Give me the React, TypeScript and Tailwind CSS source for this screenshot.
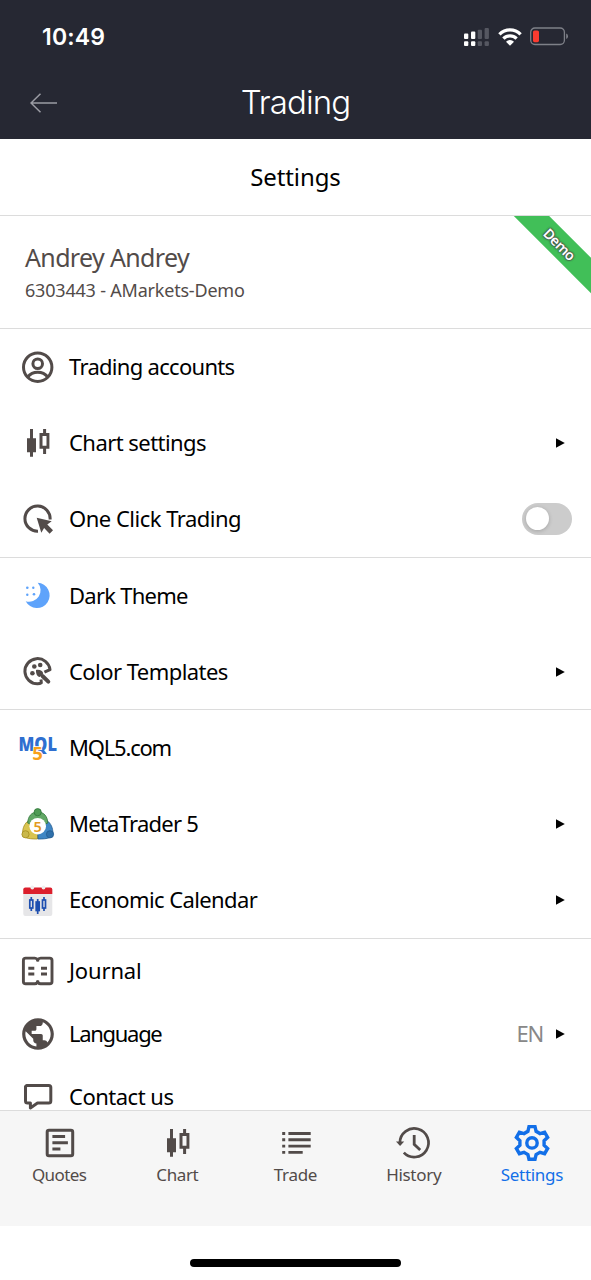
import type { ReactNode } from "react";
import { MdPublic } from "react-icons/md";

interface MenuItem {
  label: string;
  icon: ReactNode;
  tracking: string;
  arrow?: boolean;
  toggle?: boolean;
  value?: string;
}

function Icon({ children }: { children: ReactNode }) {
  return (
    <svg viewBox="0 0 38 38" className="h-[38px] w-[38px] shrink-0 overflow-visible" fill="none">
      {children}
    </svg>
  );
}

const userIcon = (
  <Icon>
    <g stroke="currentColor" strokeWidth="3">
      <circle cx="18.7" cy="19.2" r="14.2" />
      <circle cx="18.7" cy="15.7" r="4.8" />
      <path d="M8.6 29c2.6-3.3 6-4.8 10.1-4.8s7.500 1.500 10.100 4.800" />
    </g>
  </Icon>
);

const candlesIcon = (
  <Icon>
    <path fill="currentColor" d="M11 5h3v9.300h3v14h-3v4.400h-3v-4.400h-3v-14h3z" />
    <path
      fill="currentColor"
      fillRule="evenodd"
      d="M24.100 5h3v4h3.300v15.700h-3.300v5.300h-3v-5.300h-3.600v-15.700h3.600zM23.500 12v9.700h4v-9.700z"
    />
  </Icon>
);

const clickIcon = (
  <Icon>
    <path stroke="currentColor" strokeWidth="3" d="M19 31.200A12.600 12.600 0 1 1 31.100 19.500" />
    <path fill="currentColor" d="M17.700 17.700l15 3.600-4.400 3.200 5.700 5.800-3.400 3.400-5.500-5.700-2.800 4.700z" />
  </Icon>
);

const moonIcon = (
  <Icon>
    <g fill="#5ea3fb">
      <path d="M18.700 5.700A12.700 12.700 0 1 1 6.700 24.300A11.500 11.500 0 0 0 18.700 5.700z" />
      <circle cx="8.300" cy="10.700" r="1.300" />
      <circle cx="14.300" cy="10.700" r="1.200" />
      <circle cx="8.300" cy="17.700" r="1.200" />
      <circle cx="15" cy="17.300" r="1.300" />
    </g>
  </Icon>
);

const paletteIcon = (
  <Icon>
    <path
      stroke="currentColor"
      strokeWidth="3"
      strokeLinejoin="round"
      d="M22 26.500l.3 3.300c-1 .7-2.300 1-3.700 1A12.600 12.600 0 1 1 31 16.600l-5.600 2.600"
    />
    <g fill="currentColor">
      <circle cx="15.300" cy="13.500" r="2.300" />
      <circle cx="21.200" cy="12" r="2.300" />
      <circle cx="13.400" cy="20.200" r="2.300" />
      <path d="M17 17c3.500-.6 6.700.4 7.200 3.500l-3.400 3.500c-2.800-.5-4-3.500-3.800-7z" />
    </g>
    <path stroke="currentColor" strokeWidth="4" strokeLinecap="round" d="M23.500 23l5.800 5.600" />
  </Icon>
);

const mqlIcon = (
  <Icon>
    <g className="font-['Open_Sans',sans-serif]">
      <text
        x="-0.500"
        y="22"
        fontSize="19"
        textLength="38.500"
        lengthAdjust="spacingAndGlyphs"
        fill="#2f6fd0"
        className="font-extrabold"
      >
        MQL
      </text>
      <text
        x="13.300"
        y="30.500"
        fontSize="18.500"
        fill="#f7a11b"
        stroke="#fff"
        strokeWidth="1.500"
        paintOrder="stroke"
        className="font-bold"
      >
        5
      </text>
    </g>
  </Icon>
);

const metaTraderIcon = (
  <Icon>
    <g strokeWidth="0.800">
      <path fill="#d9c450" stroke="#a58d20" d="M9.500 15.500C5.500 18.500 3.500 23 3.600 28.500c0 4 4.400 5.600 14.900 5.500l.2-12z" />
      <path fill="#3f86c4" stroke="#235c91" d="M28 15.500c4 3 6 7.500 5.900 13 0 4-4.400 5.600-14.900 5.500l-.3-12z" />
      <path fill="#62a866" stroke="#2f7638" d="M8.700 18c.3-6.500 3.500-11 10-11s9.800 4.500 10.100 11l-10.100 4z" />
      <circle cx="18.700" cy="7.200" r="3.600" fill="#4f9b55" stroke="#2f7638" />
      <circle cx="6.500" cy="29.300" r="3.600" fill="#c9b84c" stroke="#a58d20" />
      <circle cx="31" cy="29.300" r="3.600" fill="#2f70ab" stroke="#235c91" />
    </g>
    <circle cx="18.700" cy="21.200" r="8.300" fill="#fff" />
    <text
      x="18.700"
      y="26.500"
      textAnchor="middle"
      fontSize="14.500"
      fill="#e39b1e"
      className="font-['Noto_Sans',sans-serif] font-semibold"
    >
      5
    </text>
  </Icon>
);

const calendarIcon = (
  <Icon>
    <rect x="4.300" y="7" width="29" height="28" rx="2" fill="#e6e6e8" />
    <path fill="#dc1f2c" d="M4.300 13V8.500q0-2 2-2h25q2 0 2 2V13z" />
    <circle cx="13.300" cy="6.500" r="1.900" fill="#eee" />
    <circle cx="24.500" cy="6.500" r="1.900" fill="#eee" />
    <g stroke="#1e4fb0" strokeWidth="1.700">
      <path d="M12.300 16v3m0 8v3M18.700 18v15M25 16v3m0 8v3" />
      <rect x="10.800" y="19" width="3" height="8" />
      <rect x="17.200" y="21" width="3" height="8.500" fill="#1e4fb0" />
      <rect x="23.500" y="19" width="3" height="8" />
    </g>
  </Icon>
);

const journalIcon = (
  <Icon>
    <path
      stroke="currentColor"
      strokeWidth="2.900"
      strokeLinejoin="round"
      d="M18.700 8c-.6-1.300-1.600-1.900-3-1.900H6.700q-2.300 0-2.300 2.300v21q0 2.300 2.300 2.300h9c1.400 0 2.400-.6 3-1.900.6 1.300 1.600 1.900 3 1.900h9q2.300 0 2.300-2.300v-21q0-2.300-2.300-2.300h-9c-1.400 0-2.400.6-3 1.900z"
    />
    <path stroke="currentColor" strokeWidth="2.900" d="M9.300 16.200h6M9.300 22h6M22 16.200h6M22 22h6M18.700 7v2.500M18.700 28.500v2.500" />
  </Icon>
);

const globeIcon = <MdPublic className="h-[38px] w-[38px] shrink-0" />;

const contactIcon = (
  <Icon>
    <path
      stroke="currentColor"
      strokeWidth="3"
      strokeLinejoin="round"
      d="M7.500 7.600h22.300q2 0 2 2v13.500q0 2-2 2H18.500L11.400 30v-4.900H8.500q-2 0-2-2V8.600z"
    />
  </Icon>
);

const quotesIcon = (
  <Icon>
    <rect x="6.200" y="6.200" width="25.500" height="25.500" rx="1.800" stroke="currentColor" strokeWidth="3" />
    <path stroke="currentColor" strokeWidth="3" d="M11.400 12.500h12.700M11.400 18.800h15.500M11.400 25.100h8" />
  </Icon>
);

const tradeIcon = (
  <Icon>
    <path
      stroke="currentColor"
      strokeWidth="2.900"
      d="M5.200 9.500h3M5.200 15.800h3M5.200 22.100h3M5.200 28.400h3M11.400 9.500h22.300M11.400 15.800h22.300M11.400 22.100h22.300M11.400 28.400h14.300"
    />
  </Icon>
);

const historyIcon = (
  <Icon>
    <path stroke="currentColor" strokeWidth="2.700" d="M4.900 18.700A14.300 14.300 0 1 1 8.800 28.600" />
    <path fill="currentColor" d="M1 17.400h8.200l-4.100 4.600z" />
    <path stroke="currentColor" strokeWidth="2.800" d="M19.200 11v9.300l6 5.600" />
  </Icon>
);

// Six teeth, four outline points each, rotated around the centre
const gearPoints = [0, 60, 120, 180, 240, 300]
  .flatMap((deg) => {
    const a = (deg * Math.PI) / 180;
    return [
      [-4.1, -11.6],
      [-3, -16.3],
      [3, -16.3],
      [4.1, -11.6],
    ].map(([x, y]) => `${19 + x * Math.cos(a) - y * Math.sin(a)},${18.9 + x * Math.sin(a) + y * Math.cos(a)}`);
  })
  .join(" ");

const gearIcon = (
  <Icon>
    <g stroke="currentColor" strokeWidth="3.400">
      <polygon points={gearPoints} />
      <circle cx="19" cy="18.900" r="5.200" />
    </g>
  </Icon>
);

const groups: MenuItem[][] = [
  [
    { label: "Trading accounts", icon: userIcon, tracking: "tracking-[-0.7px]" },
    { label: "Chart settings", icon: candlesIcon, tracking: "tracking-[-0.55px]", arrow: true },
    { label: "One Click Trading", icon: clickIcon, tracking: "tracking-[-0.5px]", toggle: true },
  ],
  [
    { label: "Dark Theme", icon: moonIcon, tracking: "tracking-[-0.75px]" },
    { label: "Color Templates", icon: paletteIcon, tracking: "tracking-[-0.55px]", arrow: true },
  ],
  [
    { label: "MQL5.com", icon: mqlIcon, tracking: "tracking-[-1.2px]" },
    { label: "MetaTrader 5", icon: metaTraderIcon, tracking: "tracking-[-0.75px]", arrow: true },
    { label: "Economic Calendar", icon: calendarIcon, tracking: "tracking-[-0.6px]", arrow: true },
  ],
  [
    { label: "Journal", icon: journalIcon, tracking: "tracking-[-0.15px]" },
    { label: "Language", icon: globeIcon, tracking: "tracking-[-1.3px]", value: "EN", arrow: true },
    { label: "Contact us", icon: contactIcon, tracking: "tracking-[-0.5px]" },
  ],
];

const tabs = [
  { label: "Quotes", icon: quotesIcon, tracking: "tracking-[-0.6px]" },
  { label: "Chart", icon: candlesIcon, tracking: "tracking-[-0.4px]" },
  { label: "Trade", icon: tradeIcon, tracking: "tracking-[-0.3px]" },
  { label: "History", icon: historyIcon, tracking: "tracking-[-0.3px]" },
  { label: "Settings", icon: gearIcon, tracking: "tracking-[-0.3px]", active: true },
];

function StatusBar() {
  return (
    <div className="flex h-[72px] items-center justify-between pt-px pl-[42px] pr-[22px]">
      <span className="pt-px font-['Inter',sans-serif] text-[23px] font-semibold leading-none tracking-[0.2px]">
        10:49
      </span>
      <div className="flex items-center">
        <svg width="25" height="20" viewBox="0 0 25 20" className="mr-[9px]">
          <g fill="#fff">
            <rect x="0" y="6.500" width="4.300" height="5.500" rx="1" />
            <rect x="7" y="4.500" width="4.300" height="7.500" rx="1" />
            <rect x="0" y="14.300" width="4.300" height="4.700" rx="1" />
            <rect x="7" y="14.300" width="4.300" height="4.700" rx="1" />
          </g>
          <g fill="#555761">
            <rect x="13.700" y="2.700" width="4.300" height="9.300" rx="1" />
            <rect x="20.600" y="1" width="4.300" height="11" rx="1" />
            <rect x="13.700" y="14.300" width="4.300" height="4.700" rx="1" />
            <rect x="20.600" y="14.300" width="4.300" height="4.700" rx="1" />
          </g>
        </svg>
        <svg width="24" height="20" viewBox="0 0 24 20" className="mr-[8px]" fill="none">
          <g stroke="#fff" strokeWidth="3.300">
            <path d="M1.400 7.300a15 15 0 0 1 21.200 0" />
            <path d="M5.400 11.700a9.300 9.300 0 0 1 13.200 0" />
          </g>
          <path fill="#fff" d="M8 14.700a5.600 5.600 0 0 1 8 0L12 18.800z" />
        </svg>
        <svg width="39" height="20" viewBox="0 0 39 20" fill="none">
          <rect x="0.700" y="1" width="33.700" height="16.500" rx="4.200" stroke="#7e8088" strokeWidth="1.300" />
          <rect x="3" y="3.500" width="6" height="11.700" rx="1.600" fill="#fb3b30" />
          <path fill="#7e8088" d="M36.200 6.500q1.800.8 1.800 2.800t-1.800 2.800z" />
        </svg>
      </div>
    </div>
  );
}

function MenuRow({ item, compact }: { item: MenuItem; compact: boolean }) {
  return (
    <div className={`flex shrink-0 items-center pl-[19px] ${compact ? "h-[63px]" : "h-[75.9px]"}`}>
      <span className="text-[#524b49]">{item.icon}</span>
      <span className={`ml-3 whitespace-nowrap pb-[2px] text-[22px] leading-none text-black ${item.tracking}`}>
        {item.label}
      </span>
      {item.value && (
        <span className="ml-auto pb-[2px] text-[22px] leading-none tracking-[-1.2px] text-[#888]">{item.value}</span>
      )}
      {item.arrow && (
        <svg
          width="9"
          height="10"
          viewBox="0 0 9 10"
          className={`mr-[26px] ${item.value ? "ml-[13px]" : "ml-auto"}`}
        >
          <path d="M0 .3l8.800 4.700L0 9.700z" />
        </svg>
      )}
      {item.toggle && (
        <span className="ml-auto mr-[19px] flex h-8 w-[50px] items-center rounded-full bg-[#ccc] pl-1">
          <span className="h-[23px] w-[23px] rounded-full bg-white shadow-[0_1px_4px_rgba(0,0,0,0.2)]" />
        </span>
      )}
    </div>
  );
}

export default function App() {
  return (
    <div className="flex h-[1280px] w-[591px] flex-col overflow-hidden bg-white font-['Noto_Sans',sans-serif]">
      <header className="h-[138.5px] shrink-0 bg-[#262833] text-white">
        <StatusBar />
        <div className="grid h-[60px] grid-cols-[100px_1fr_100px] items-center">
          <svg width="28" height="22" viewBox="0 0 28 22" fill="none" className="ml-[30px] mt-[2px]">
            <path stroke="#9b9ca4" strokeWidth="1.500" d="M27 11H1M10.500 1.700L1 11l9.500 9.300" />
          </svg>
          <h1 className="text-center font-['Inter',sans-serif] text-[33px] font-light leading-none tracking-[-0.9px]">
            Trading
          </h1>
        </div>
      </header>

      <div className="flex h-[77.5px] shrink-0 items-center justify-center border-b border-[#dcdcdc] text-[24px] leading-none tracking-[-0.1px] text-black">
        Settings
      </div>

      <section className="relative h-[113px] shrink-0 overflow-hidden border-b border-[#dcdcdc] pl-[25px] pt-[28px] text-[#524b49]">
        <p className="text-[25px] leading-[26px] tracking-[-0.65px]">Andrey Andrey</p>
        <p className="mt-[8px] text-[18px] leading-[24px] tracking-[-0.2px]">6303443 - AMarkets-Demo</p>
        <div className="absolute right-[-40px] top-[17px] flex h-[25px] w-[140px] rotate-45 items-center justify-center bg-[#41bf58] pr-1 text-[14px] font-semibold leading-none tracking-[-0.6px] text-white [text-shadow:0_0_2px_#444,0_0_2px_#444,0_0_2px_#444]">
          Demo
        </div>
      </section>

      <main className="flex min-h-0 flex-1 flex-col overflow-hidden">
        {groups.map((group, i) => (
          <div key={i} className={`shrink-0 ${i < groups.length - 1 ? "border-b border-[#dcdcdc]" : ""}`}>
            {group.map((item) => (
              <MenuRow key={item.label} item={item} compact={i === groups.length - 1} />
            ))}
          </div>
        ))}
      </main>

      <nav className="grid h-[116px] shrink-0 grid-cols-5 border-t border-[#dcdcdc] bg-[#f6f6f6]">
        {tabs.map((tab) => (
          <div
            key={tab.label}
            className={`flex flex-col items-center pt-[13px] ${tab.active ? "text-[#126fe8]" : "text-[#524b49]"}`}
          >
            <span className="ml-px">{tab.icon}</span>
            <span className={`mt-[4px] text-[17px] leading-[18px] ${tab.tracking}`}>{tab.label}</span>
          </div>
        ))}
      </nav>

      <div className="flex h-[54px] shrink-0 justify-center pt-[33px]">
        <div className="h-2 w-[211px] rounded-full bg-black" />
      </div>
    </div>
  );
}
